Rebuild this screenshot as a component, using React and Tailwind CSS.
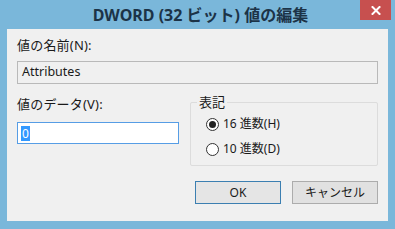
export default function App() {
  const ui = { fontFamily: '"Segoe UI", "Noto Sans", "Noto Sans CJK JP", sans-serif' };
  return (
    <div className="w-[395px] h-[229px] bg-[#7ab7da] flex flex-col overflow-hidden" style={ui}>
      <div className="relative h-[29px] flex items-center justify-center shrink-0">
        <span className="text-[16px] font-bold text-[#1c3347] leading-none mt-[1px] ml-[6px]" style={{ fontFamily: '"Noto Sans", "Noto Sans CJK JP", sans-serif' }}>
          DWORD (32 ビット) 値の編集
        </span>
        <div className="absolute right-[4px] top-0 w-[31px] h-[20px] bg-[#c7504f] flex items-center justify-center">
          <svg width="10" height="9" viewBox="0 0 10 9">
            <path d="M1.5 1 L8.5 8 M8.5 1 L1.5 8" stroke="white" strokeWidth="2" strokeLinecap="square" />
          </svg>
        </div>
      </div>
      <div className="mx-[7px] h-[192px] bg-[#f0f0f0] flex flex-col px-[10px] text-[12px] text-[#1a1a1a]">
        <div className="mt-[8px] h-[16px] leading-[16px] text-[13px] tracking-[0.2px]">値の名前(N):</div>
        <div className="mt-[8px] h-[23px] border border-[#b9b9b9] bg-[#f0f0f0] flex items-center px-[4px] text-[12.5px]">Attributes</div>
        <div className="flex mt-[11px]">
          <div className="w-[162px] flex flex-col">
            <div className="mt-[1px] h-[16px] leading-[16px] text-[13px] tracking-[0.2px]">値のデータ(V):</div>
            <div className="mt-[10px] h-[22px] border border-[#569de5] bg-white flex items-center px-[3px]">
              <span className="bg-[#3399ff] text-white leading-[15px] px-[1px]">0</span>
            </div>
          </div>
          <div className="ml-auto w-[188px] relative mt-[7px] h-[64px] border border-[#dcdcdc] rounded-[2px]">
            <span className="absolute left-[6px] top-[-9px] px-[2px] bg-[#f0f0f0] leading-[16px] text-[13px]">表記</span>
            <div className="flex flex-col pl-[15px] pt-[13px] gap-[9px]">
              <div className="flex items-center gap-[4px] h-[16px]">
                <span className="w-[13px] h-[13px] rounded-full border border-[#333] bg-white flex items-center justify-center">
                  <span className="w-[7px] h-[7px] rounded-full bg-[#222]" />
                </span>
                <span>16 進数(H)</span>
              </div>
              <div className="flex items-center gap-[4px] h-[16px]">
                <span className="w-[13px] h-[13px] rounded-full border border-[#333] bg-white" />
                <span>10 進数(D)</span>
              </div>
            </div>
          </div>
        </div>
        <div className="flex justify-end gap-[11px] mt-[15px]">
          <button className="w-[86px] h-[23px] border border-[#3c7fb1] bg-[#e5e5e5] text-[12px] text-[#1a1a1a]">OK</button>
          <button className="w-[86px] h-[23px] border border-[#acacac] bg-[#e1e1e1] text-[12px] text-[#1a1a1a]">キャンセル</button>
        </div>
      </div>
    </div>
  );
}
